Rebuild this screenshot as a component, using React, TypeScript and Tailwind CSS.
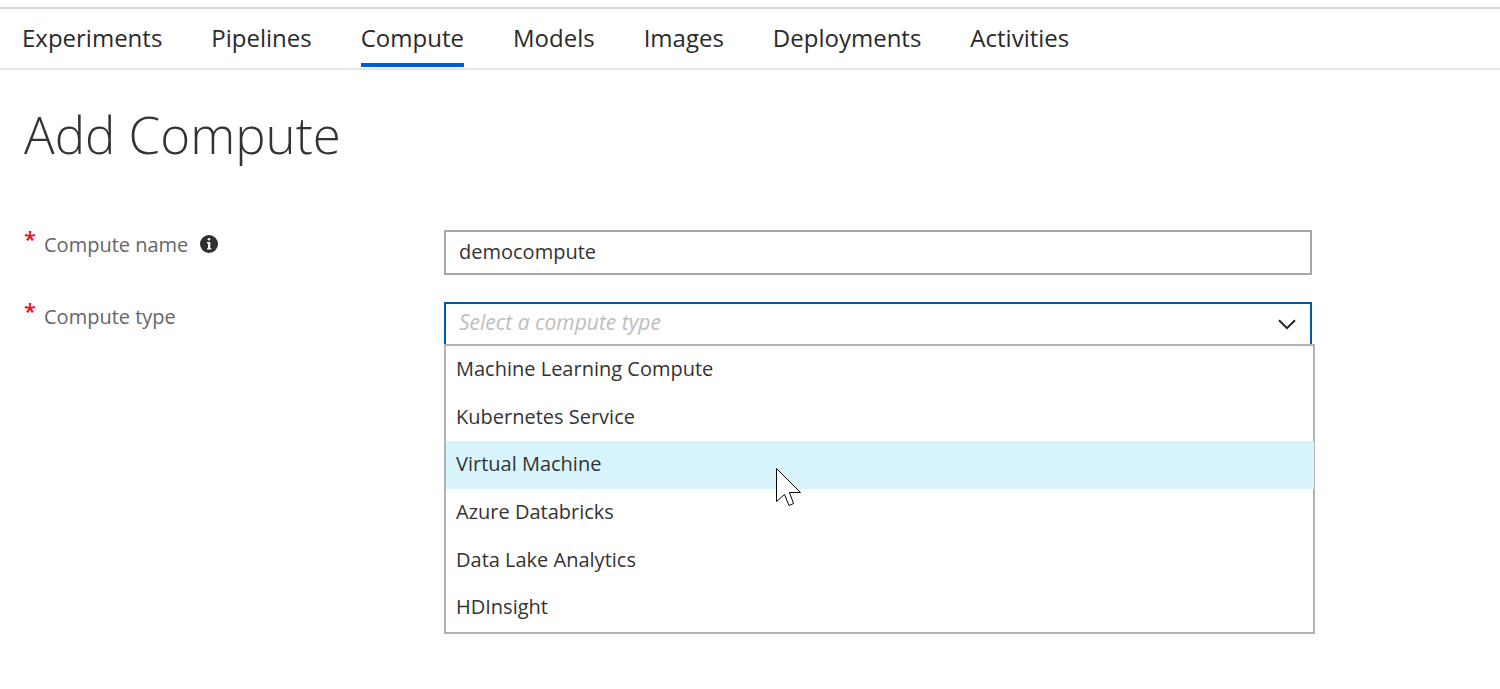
import { useState } from "react";

const tabs = ["Experiments", "Pipelines", "Compute", "Models", "Images", "Deployments", "Activities"];

const computeTypes = [
  "Machine Learning Compute",
  "Kubernetes Service",
  "Virtual Machine",
  "Azure Databricks",
  "Data Lake Analytics",
  "HDInsight",
];

function InfoIcon() {
  return (
    <svg viewBox="0 0 18 18" className="size-[18px]" role="img" aria-label="Information">
      <circle cx="9" cy="9" r="9" fill="#2f2f2f" />
      <circle cx="9" cy="4.2" r="1.3" fill="#fff" />
      <path d="M7 7H10.3V13.2H11.3V14.6H7V13.2H8V8.4H7Z" fill="#fff" />
    </svg>
  );
}

function ChevronIcon() {
  return (
    <svg viewBox="0 0 18 11" className="h-[11px] w-[18px]" fill="none" aria-hidden="true">
      <path d="M1 1.2L9 9.2L17 1.2" stroke="#222" strokeWidth="2" />
    </svg>
  );
}

function Pointer() {
  return (
    <svg viewBox="0 0 26 39" className="h-[39px] w-[26px]" aria-hidden="true">
      <path
        d="M0.5 0.5V33.5L8.5 26.5L13 37.5L17.5 35.5L13.5 24.5H24.5Z"
        fill="#fff"
        stroke="#000"
        strokeWidth="1"
      />
    </svg>
  );
}

function Required() {
  return (
    <span className="w-5 shrink-0 text-[22px] leading-4 font-semibold text-[#e81123]" aria-hidden="true">
      *
    </span>
  );
}

export default function App() {
  const [name, setName] = useState("democompute");
  const [type, setType] = useState("");

  return (
    <div className="min-h-screen bg-white pt-[7px] font-['Open_Sans','Noto_Sans',sans-serif] text-[#333]">
      <nav className="flex gap-[49px] border-t-2 border-b-2 border-t-[#d6d6d6] border-b-[#e6e6e6] px-[22px]">
        {tabs.map((tab) => (
          <a
            key={tab}
            href={"#" + tab.toLowerCase()}
            aria-current={tab === "Compute" ? "page" : undefined}
            className={
              tab === "Compute"
                ? "mb-px border-b-4 border-[#015cda] pt-[14px] pb-[10px] text-2xl leading-[30px] text-[#2a2a2a]"
                : "mb-px border-b-4 border-transparent pt-[14px] pb-[10px] text-2xl leading-[30px] text-[#2a2a2a]"
            }
          >
            {tab}
          </a>
        ))}
      </nav>

      <main className="px-6 pt-8">
        <h1 className="text-[51px] leading-[64px] font-light">Add Compute</h1>

        <form className="mt-16 flex flex-col gap-[27px]">
          <div className="grid grid-cols-[420px_minmax(0,868px)]">
            <div className="flex">
              <Required />
              <label htmlFor="compute-name" className="text-xl leading-[30px] text-[#666]">
                Compute name
              </label>
              <span className="ml-3 flex h-7 items-center">
                <InfoIcon />
              </span>
            </div>
            <input
              id="compute-name"
              type="text"
              value={name}
              onChange={(e) => setName(e.target.value)}
              className="h-[45px] border-2 border-[#a6a6a6] px-[13px] pb-[3px] text-xl outline-none"
            />
          </div>

          <div className="grid grid-cols-[420px_minmax(0,868px)]">
            <div className="flex">
              <Required />
              <label htmlFor="compute-type" className="text-xl leading-[30px] text-[#666]">
                Compute type
              </label>
            </div>
            <div className="relative">
              <select
                id="compute-type"
                value={type}
                onChange={(e) => setType(e.target.value)}
                className="h-[45px] w-full appearance-none border-2 border-[#0058ad] bg-white px-[13px] pb-[3px] text-[21px] text-[#bebebe] italic outline-none"
              >
                <option value="">Select a compute type</option>
                {computeTypes.map((t) => (
                  <option key={t}>{t}</option>
                ))}
              </select>
              <span className="pointer-events-none absolute top-[17px] right-4">
                <ChevronIcon />
              </span>
              <ul
                role="listbox"
                aria-label="Compute type"
                className="absolute top-[42px] -right-[3px] left-0 flex h-[290px] flex-col border-2 border-[#b3b3b3] bg-white text-xl"
              >
                {computeTypes.map((t) => (
                  <li
                    key={t}
                    role="option"
                    aria-selected={type === t}
                    onClick={() => setType(t)}
                    className={
                      t === "Virtual Machine"
                        ? "-mr-px flex flex-1 items-center bg-[#d8f5fe] px-[10px] pb-[2px]"
                        : "flex flex-1 items-center px-[10px] pb-[2px]"
                    }
                  >
                    {t}
                  </li>
                ))}
              </ul>
              <span className="pointer-events-none absolute top-[166px] left-[332px]">
                <Pointer />
              </span>
            </div>
          </div>
        </form>
      </main>
    </div>
  );
}
